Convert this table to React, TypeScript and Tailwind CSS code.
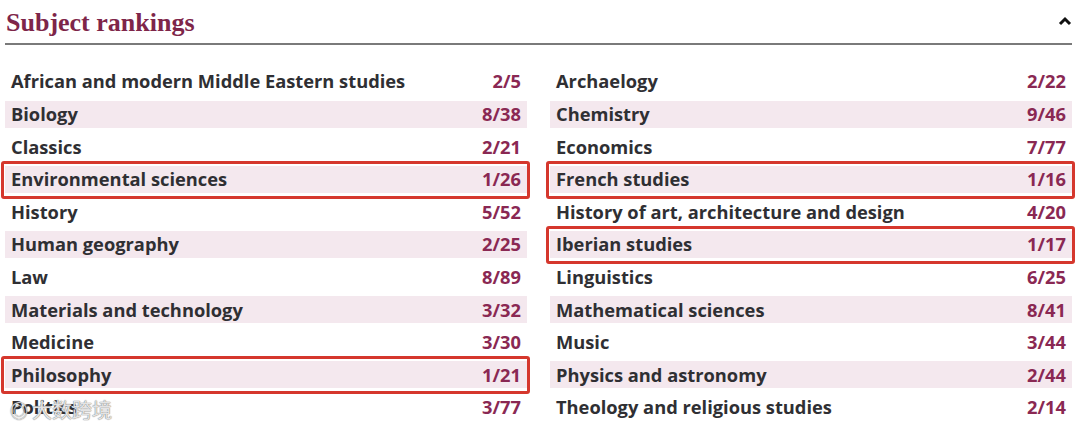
import React from 'react';

type Ranking = { subject: string; rank: string; highlight?: boolean };

const left: Ranking[] = [
  { subject: 'African and modern Middle Eastern studies', rank: '2/5' },
  { subject: 'Biology', rank: '8/38' },
  { subject: 'Classics', rank: '2/21' },
  { subject: 'Environmental sciences', rank: '1/26', highlight: true },
  { subject: 'History', rank: '5/52' },
  { subject: 'Human geography', rank: '2/25' },
  { subject: 'Law', rank: '8/89' },
  { subject: 'Materials and technology', rank: '3/32' },
  { subject: 'Medicine', rank: '3/30' },
  { subject: 'Philosophy', rank: '1/21', highlight: true },
  { subject: 'Politics', rank: '3/77' },
];

const right: Ranking[] = [
  { subject: 'Archaelogy', rank: '2/22' },
  { subject: 'Chemistry', rank: '9/46' },
  { subject: 'Economics', rank: '7/77' },
  { subject: 'French studies', rank: '1/16', highlight: true },
  { subject: 'History of art, architecture and design', rank: '4/20' },
  { subject: 'Iberian studies', rank: '1/17', highlight: true },
  { subject: 'Linguistics', rank: '6/25' },
  { subject: 'Mathematical sciences', rank: '8/41' },
  { subject: 'Music', rank: '3/44' },
  { subject: 'Physics and astronomy', rank: '2/44' },
  { subject: 'Theology and religious studies', rank: '2/14' },
];

function Row({ item, shaded }: { item: Ranking; shaded: boolean }) {
  return (
    <div
      className={`relative flex h-[27px] items-center justify-between px-[6px] ${
        shaded ? 'bg-[#f4e8ee]' : ''
      }`}
    >
      <span className="text-[#2f2f33]">{item.subject}</span>
      <span className="text-[#8a2853]">{item.rank}</span>
      {/* 红框标注 */}
      {item.highlight && (
        <div className="pointer-events-none absolute -top-[5px] -bottom-[6px] -left-[4px] -right-[3px] rounded-[3px] border-[3px] border-[#d5372d]" />
      )}
    </div>
  );
}

function Column({ items }: { items: Ranking[] }) {
  return (
    <div className="flex flex-col gap-y-[5.6px]">
      {items.map((item, i) => (
        <Row key={item.subject} item={item} shaded={i % 2 === 1} />
      ))}
    </div>
  );
}

export default function App() {
  return (
    <div className="relative h-[429px] w-[1080px] overflow-hidden bg-white">
      {/* 标题 */}
      <div className="flex h-[45px] items-center justify-between border-b-2 border-[#7a7a7a] ml-[5px] mr-[8px] pt-[2px]">
        <h2
          className="pl-[1px] text-[26px] font-bold leading-none text-[#7e2549]"
          style={{ fontFamily: '"Liberation Serif", "DejaVu Serif", serif' }}
        >
          Subject rankings
        </h2>
        <svg width="14" height="10" viewBox="0 0 14 10" className="mb-[4px]">
          <path d="M2 8 L7 3 L12 8" fill="none" stroke="#111" strokeWidth="3" />
        </svg>
      </div>

      {/* 排名列表 */}
      <div
        className="mt-[23px] grid grid-cols-2 gap-x-[23px] pl-[5px] pr-[8px] text-[18.3px] font-bold leading-none"
        style={{ fontFamily: '"Open Sans", "Noto Sans", sans-serif' }}
      >
        <Column items={left} />
        <Column items={right} />
      </div>

      {/* 水印 */}
      <div
        className="absolute left-[10px] top-[395px] flex items-center gap-[4px] text-[20px] text-white/80"
        style={{
          fontFamily: '"Noto Sans CJK SC", sans-serif',
          textShadow: '0 0 1px #777, 0 0 1px #777',
        }}
      >
        <span className="text-[18px]">◎</span>
        <span>大数跨境</span>
      </div>
    </div>
  );
}
